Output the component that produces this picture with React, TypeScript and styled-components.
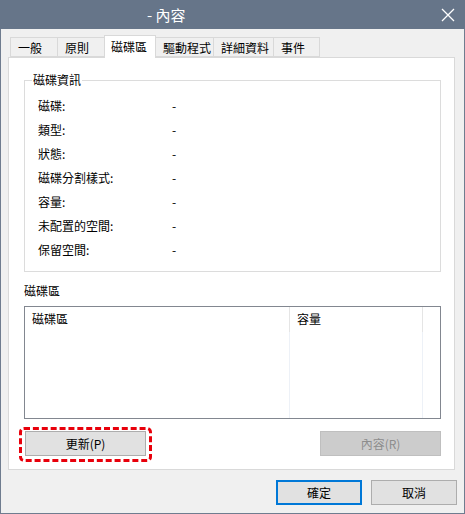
import { FC } from "react";
import styled, { createGlobalStyle } from "styled-components";

const GlobalStyle = createGlobalStyle`
  html, body {
    margin: 0;
    padding: 0;
    background: #ffffff;
  }
  body {
    font-family: "Noto Sans CJK TC", "Noto Sans", sans-serif;
    font-size: 12px;
    color: #000;
  }
`

const tabs = [
    {name: '一般', width: 48},
    {name: '原則', width: 48},
    {name: '磁碟區', width: 52},
    {name: '驅動程式', width: 59},
    {name: '詳細資料', width: 61},
    {name: '事件', width: 47},
]
const activeTab = '磁碟區'

const infoRows = [
    {label: '磁碟:', value: '-'},
    {label: '類型:', value: '-'},
    {label: '狀態:', value: '-'},
    {label: '磁碟分割樣式:', value: '-'},
    {label: '容量:', value: '-'},
    {label: '未配置的空間:', value: '-'},
    {label: '保留空間:', value: '-'},
]

const App: FC = () => {
    return <>
        <GlobalStyle/>
        <Window>
            <TitleBar>
                <Title>- 內容</Title>
                <CloseButton aria-label="close">
                    <svg width="14" height="14" viewBox="0 0 14 14">
                        <path d="M1 1 L13 13 M13 1 L1 13" stroke="#ffffff" strokeWidth="1.3"/>
                    </svg>
                </CloseButton>
            </TitleBar>
            <Body>
                <TabStrip>
                    {tabs.map(t => <Tab key={t.name} width={t.width} active={t.name === activeTab}>{t.name}</Tab>)}
                </TabStrip>
                <TabPanel>
                    <GroupBox>
                        <Legend>磁碟資訊</Legend>
                        <InfoGrid>
                            {infoRows.map(r => <InfoRow key={r.label}>
                                <span>{r.label}</span>
                                <span>{r.value}</span>
                            </InfoRow>)}
                        </InfoGrid>
                    </GroupBox>
                    <SectionLabel>磁碟區</SectionLabel>
                    <ListView>
                        <ListHeader>
                            <HeaderCell width={265}>磁碟區</HeaderCell>
                            <HeaderCell width={133}>容量</HeaderCell>
                            <HeaderCell width={17}/>
                        </ListHeader>
                        <ListBody>
                            <ColumnFill width={265}/>
                            <ColumnFill width={133}/>
                            <ColumnFill width={17}/>
                        </ListBody>
                    </ListView>
                    <ActionRow>
                        <Highlight>
                            <Button width={121}>更新(P)</Button>
                        </Highlight>
                        <Button width={121} disabled>內容(R)</Button>
                    </ActionRow>
                </TabPanel>
                <Footer>
                    <Button width={86} primary>確定</Button>
                    <Button width={86}>取消</Button>
                </Footer>
            </Body>
        </Window>
    </>
}

export default App

const Window = styled.div`
  width: 465px;
  height: 514px;
  box-sizing: border-box;
  border: 1px solid #6f7c8f;
  border-top: none;
  background: #f0f0f0;
  display: flex;
  flex-direction: column;
`

const TitleBar = styled.div`
  height: 29px;
  margin: 0 -1px;
  background: #667589;
  display: flex;
  align-items: center;
`

const Title = styled.div`
  padding-left: 147px;
  color: #ffffff;
  font-size: 15px;
  flex: 1;
`

const CloseButton = styled.div`
  width: 32px;
  height: 29px;
  display: flex;
  align-items: center;
  justify-content: center;
  margin-right: 1px;
`

const Body = styled.div`
  flex: 1;
  padding: 6px 8px 0 7px;
  display: flex;
  flex-direction: column;
`

const TabStrip = styled.div`
  display: flex;
  align-items: flex-end;
  padding-left: 3px;
  height: 22px;
  position: relative;
  z-index: 1;
`

const Tab = styled.div<{ width: number; active?: boolean }>`
  box-sizing: border-box;
  width: ${p => p.width}px;
  height: ${p => p.active ? 23 : 20}px;
  margin-bottom: ${p => p.active ? -1 : 0}px;
  padding: ${p => p.active ? '2px 0 0 6px' : '1px 0 0 7px'};
  border: 1px solid #d9d9d9;
  border-bottom: ${p => p.active ? 'none' : '1px solid #d9d9d9'};
  margin-left: -1px;
  background: ${p => p.active ? '#ffffff' : '#f0f0f0'};
  line-height: 17px;
  white-space: nowrap;
`

const TabPanel = styled.div`
  box-sizing: border-box;
  width: 447px;
  height: 413px;
  background: #ffffff;
  border: 1px solid #d9d9d9;
  padding: 15px 13px 0 15px;
  display: flex;
  flex-direction: column;
`

const GroupBox = styled.fieldset`
  margin: 0;
  padding: 6px 0 8px 13px;
  width: 417px;
  box-sizing: border-box;
  height: 199px;
  border: 1px solid #dcdcdc;
`

const Legend = styled.legend`
  padding: 0 1px;
  margin-left: -6px;
  line-height: 14px;
`

const InfoGrid = styled.div`
  display: flex;
  flex-direction: column;
`

const InfoRow = styled.div`
  display: grid;
  grid-template-columns: 134px 1fr;
  height: 24px;
  align-items: center;
`

const SectionLabel = styled.div`
  margin-top: 11px;
  line-height: 16px;
  height: 16px;
`

const ListView = styled.div`
  margin-top: 7px;
  width: 417px;
  height: 113px;
  box-sizing: border-box;
  border: 1px solid #828790;
  display: flex;
  flex-direction: column;
`

const ListHeader = styled.div`
  display: flex;
  height: 25px;
`

const HeaderCell = styled.div<{ width: number }>`
  width: ${p => p.width}px;
  box-sizing: border-box;
  padding: 4px 0 0 7px;
  border-right: 1px solid #e5e5e5;
  line-height: 16px;
  &:last-child {
    border-right: none;
  }
`

const ListBody = styled.div`
  flex: 1;
  display: flex;
`

const ColumnFill = styled.div<{ width: number }>`
  width: ${p => p.width}px;
  box-sizing: border-box;
  border-right: 1px solid #edf1f7;
  &:last-child {
    border-right: none;
  }
`

const ActionRow = styled.div`
  margin-top: 8px;
  display: flex;
  justify-content: space-between;
  align-items: flex-start;
  margin-left: -5px;
  width: 422px;
`

const Highlight = styled.div`
  border: 3px dashed #e8000b;
  border-radius: 5px;
  padding: 1px 3px 3px 3px;
`

const Button = styled.button<{ width: number; primary?: boolean }>`
  width: ${p => p.width}px;
  height: 25px;
  box-sizing: border-box;
  margin: 0;
  margin-top: ${p => p.disabled ? 4 : 0}px;
  font-family: "Noto Sans CJK TC", "Noto Sans", sans-serif;
  font-size: 12px;
  background: ${p => p.disabled ? '#cccccc' : '#e1e1e1'};
  color: ${p => p.disabled ? '#8d8d8d' : '#000000'};
  border: ${p => p.primary ? '2px solid #0078d7' : p.disabled ? '1px solid #bfbfbf' : '1px solid #adadad'};
  padding: 0;
  line-height: 16px;
`

const Footer = styled.div`
  display: flex;
  justify-content: flex-end;
  gap: 9px;
  padding-top: 10px;
  margin-right: -1px;
`
